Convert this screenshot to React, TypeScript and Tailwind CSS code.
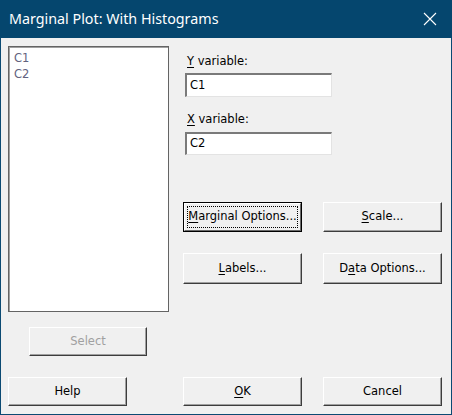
import type { ReactNode } from "react";

const ui = "font-['DejaVu_Sans',Tahoma,sans-serif] text-[11.5px] text-black";

function Btn({
  children,
  w = "w-[119px]",
  h = "h-[29px]",
  disabled = false,
  focused = false,
}: {
  children: ReactNode;
  w?: string;
  h?: string;
  disabled?: boolean;
  focused?: boolean;
}) {
  if (focused) {
    return (
      <div className={`${w} ${h} border border-black`}>
        <div className="flex h-full w-full items-center justify-center border-t border-l border-white border-r border-r-[#696969] border-b border-b-[#696969] bg-[#f0f0f0] p-[2px]">
          <div className="flex h-full w-full items-center justify-center whitespace-nowrap border border-dotted border-black">
            {children}
          </div>
        </div>
      </div>
    );
  }
  return (
    <div
      className={`${w} ${h} flex items-center justify-center whitespace-nowrap border-t border-l border-white border-r border-r-[#3c3c3c] border-b border-b-[#3c3c3c] bg-[#f0f0f0] shadow-[inset_-1px_-1px_0_#a0a0a0] ${
        disabled ? "text-[#a0a0a0]" : "text-black"
      }`}
    >
      {children}
    </div>
  );
}

function Field({ value, h }: { value: string; h: string }) {
  return (
    <div
      className={`ml-[2px] w-[147px] ${h} flex items-center border-t-2 border-l-2 border-t-[#7a7a7a] border-l-[#7a7a7a] border-r border-b border-r-[#e3e3e3] border-b-[#e3e3e3] bg-white pl-[3px]`}
    >
      {value}
    </div>
  );
}

export default function App() {
  return (
    <div className={`${ui} w-[452px] h-[415px] flex flex-col border-x border-b border-[#0b4a73] bg-[#f0f0f0]`}>
      <div className="flex h-[38px] shrink-0 items-center justify-between bg-[#05466e] pl-[9px] pr-[14px] -mx-px">
        <span className="font-['Noto_Sans',sans-serif] text-[14.3px] text-white">
          Marginal Plot: With Histograms
        </span>
        <svg width="14" height="14" viewBox="0 0 14 14" className="mr-[1px]">
          <path d="M1 1 L13 13 M13 1 L1 13" stroke="white" strokeWidth="1.1" fill="none" />
        </svg>
      </div>

      <div className="flex pl-[7px]">
        <div className="flex w-[161px] flex-col">
          <div className="mt-[8px] h-[266px] border border-[#646464] bg-white shadow-[inset_1px_1px_0_#a0a0a0]">
            <div className="flex flex-col pl-[5px] pt-[3px] leading-[16px] text-[#62627e]">
              <span>C1</span>
              <span>C2</span>
            </div>
          </div>
          <div className="ml-[21px] mt-[15px]">
            <Btn w="w-[118px]" disabled>
              Select
            </Btn>
          </div>
        </div>

        <div className="ml-[14px] flex flex-col">
          <div className="mt-[16px] h-[15px] pl-[4px] leading-[15px]">
            <span className="underline underline-offset-2">Y</span> variable:
          </div>
          <div className="mt-[4px]">
            <Field value="C1" h="h-[24px]" />
          </div>
          <div className="mt-[15px] h-[15px] pl-[4px] leading-[15px]">
            <span className="underline underline-offset-2">X</span> variable:
          </div>
          <div className="mt-[5px]">
            <Field value="C2" h="h-[23px]" />
          </div>

          <div className="mt-[47px] flex gap-[21px]">
            <Btn h="h-[30px]" focused>
              <span>
                <span className="underline underline-offset-2">M</span>arginal Options...
              </span>
            </Btn>
            <Btn h="h-[30px]">
              <span>
                <span className="underline underline-offset-2">S</span>cale...
              </span>
            </Btn>
          </div>
          <div className="mt-[21px] flex gap-[21px]">
            <Btn h="h-[31px]">
              <span>
                <span className="underline underline-offset-2">L</span>abels...
              </span>
            </Btn>
            <Btn h="h-[31px]">
              <span>
                D<span className="underline underline-offset-2">a</span>ta Options...
              </span>
            </Btn>
          </div>
        </div>
      </div>

      <div className="mt-[21px] flex pl-[7px]">
        <Btn>Help</Btn>
        <div className="ml-[56px]">
          <Btn>
            <span>
              <span className="underline underline-offset-2">O</span>K
            </span>
          </Btn>
        </div>
        <div className="ml-[21px]">
          <Btn>Cancel</Btn>
        </div>
      </div>
    </div>
  );
}
